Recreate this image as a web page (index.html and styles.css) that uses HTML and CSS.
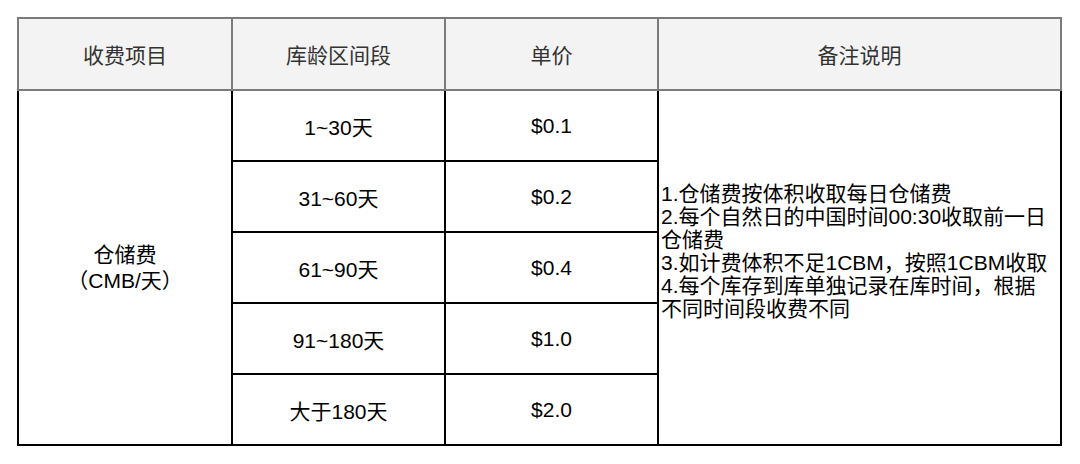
FILE: index.html
```html
<!DOCTYPE html>
<html lang="zh-CN">
<head>
<meta charset="utf-8">
<title>仓储费</title>
<link rel="stylesheet" href="styles.css">
</head>
<body>
<div class="page">
  <div class="fee-table">
    <div class="cell head first">收费项目</div>
    <div class="cell head">库龄区间段</div>
    <div class="cell head">单价</div>
    <div class="cell head">备注说明</div>

    <div class="cell body first item">仓储费<br>（CMB/天）</div>
    <div class="cell body r1">1~30天</div>
    <div class="cell body r1">$0.1</div>
    <div class="cell body notes">
      <p>1.仓储费按体积收取每日仓储费<br>2.每个自然日的中国时间00:30收取前一日仓储费<br>3.如计费体积不足1CBM，按照1CBM收取<br>4.每个库存到库单独记录在库时间，根据不同时间段收费不同</p>
    </div>

    <div class="cell body">31~60天</div>
    <div class="cell body">$0.2</div>
    <div class="cell body">61~90天</div>
    <div class="cell body">$0.4</div>
    <div class="cell body">91~180天</div>
    <div class="cell body">$1.0</div>
    <div class="cell body">大于180天</div>
    <div class="cell body">$2.0</div>
  </div>
</div>
</body>
</html>
```

FILE: styles.css
```css
html, body {
  margin: 0;
  padding: 0;
  background: #ffffff;
}

.page {
  padding: 17px 0 0 17px;
  font-family: "Liberation Sans", "Noto Sans CJK SC", sans-serif;
  font-size: 21px;
}

.fee-table {
  display: grid;
  grid-template-columns: 216px 213px 213px 403px;
  grid-template-rows: 74px repeat(5, 71px);
}

.cell {
  box-sizing: border-box;
  display: flex;
  align-items: center;
  justify-content: center;
  text-align: center;
  border-right: 2px solid #000;
  border-bottom: 2px solid #000;
}

.cell.first {
  border-left: 2px solid #000;
}

.cell.head {
  background: #f3f3f3;
  color: #333333;
  border-top: 2px solid #7b7b7b;
  border-right-color: #7b7b7b;
  border-bottom-color: #7b7b7b;
}

.cell.head.first {
  border-left-color: #7b7b7b;
}

.cell.body {
  color: #000;
}

.item {
  grid-column: 1;
  grid-row: 2 / span 5;
  line-height: 26px;
}

.notes {
  grid-column: 4;
  grid-row: 2 / span 5;
  justify-content: flex-start;
  text-align: left;
  padding: 0 8px 34px 2px;
}

.notes p {
  margin: 0;
  font-size: 21px;
  line-height: 23px;
}
```
